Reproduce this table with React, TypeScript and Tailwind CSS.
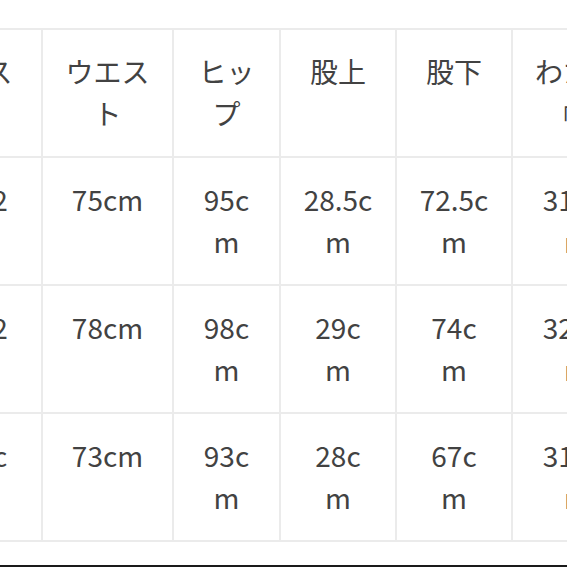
import React from "react";

const header: string[][] = [
  ["バス", "ト"],
  ["ウエス", "ト"],
  ["ヒッ", "プ"],
  ["股上"],
  ["股下"],
  ["わたり", "幅"],
];

const rows: string[][][] = [
  [["102", "m"], ["75cm"], ["95c", "m"], ["28.5c", "m"], ["72.5c", "m"], ["31.5c", "m"]],
  [["102", "m"], ["78cm"], ["98c", "m"], ["29c", "m"], ["74c", "m"], ["32.5c", "m"]],
  [["90c", "m"], ["73cm"], ["93c", "m"], ["28c", "m"], ["67c", "m"], ["31.5c", "m"]],
];

function Cell({ lines }: { lines: string[] }) {
  return (
    <div className="bg-white h-[126px] pt-[20px] flex flex-col items-center text-center whitespace-nowrap">
      {lines.map((l, i) => (
        <span key={i} className="block leading-[42px]">
          {l}
        </span>
      ))}
    </div>
  );
}

export default function App() {
  return (
    <div
      className="w-[567px] h-[567px] bg-white overflow-hidden flex flex-col text-[28px] text-[#424242]"
      style={{ fontFamily: '"Noto Sans CJK JP", "Noto Sans", sans-serif' }}
    >
      <div className="pt-[28px]">
        <div className="ml-[-74px] w-max grid grid-cols-[113px_129px_105px_114px_114px_128px] gap-[2px] p-[2px] bg-[#ebebeb]">
          {header.map((h, i) => (
            <Cell key={"h" + i} lines={h} />
          ))}
          {rows.map((r, ri) =>
            r.map((c, ci) => <Cell key={ri + "-" + ci} lines={c} />)
          )}
        </div>
      </div>
      <div className="flex-1" />
      <div className="h-[2px] bg-[#1a1a1a]" />
    </div>
  );
}
